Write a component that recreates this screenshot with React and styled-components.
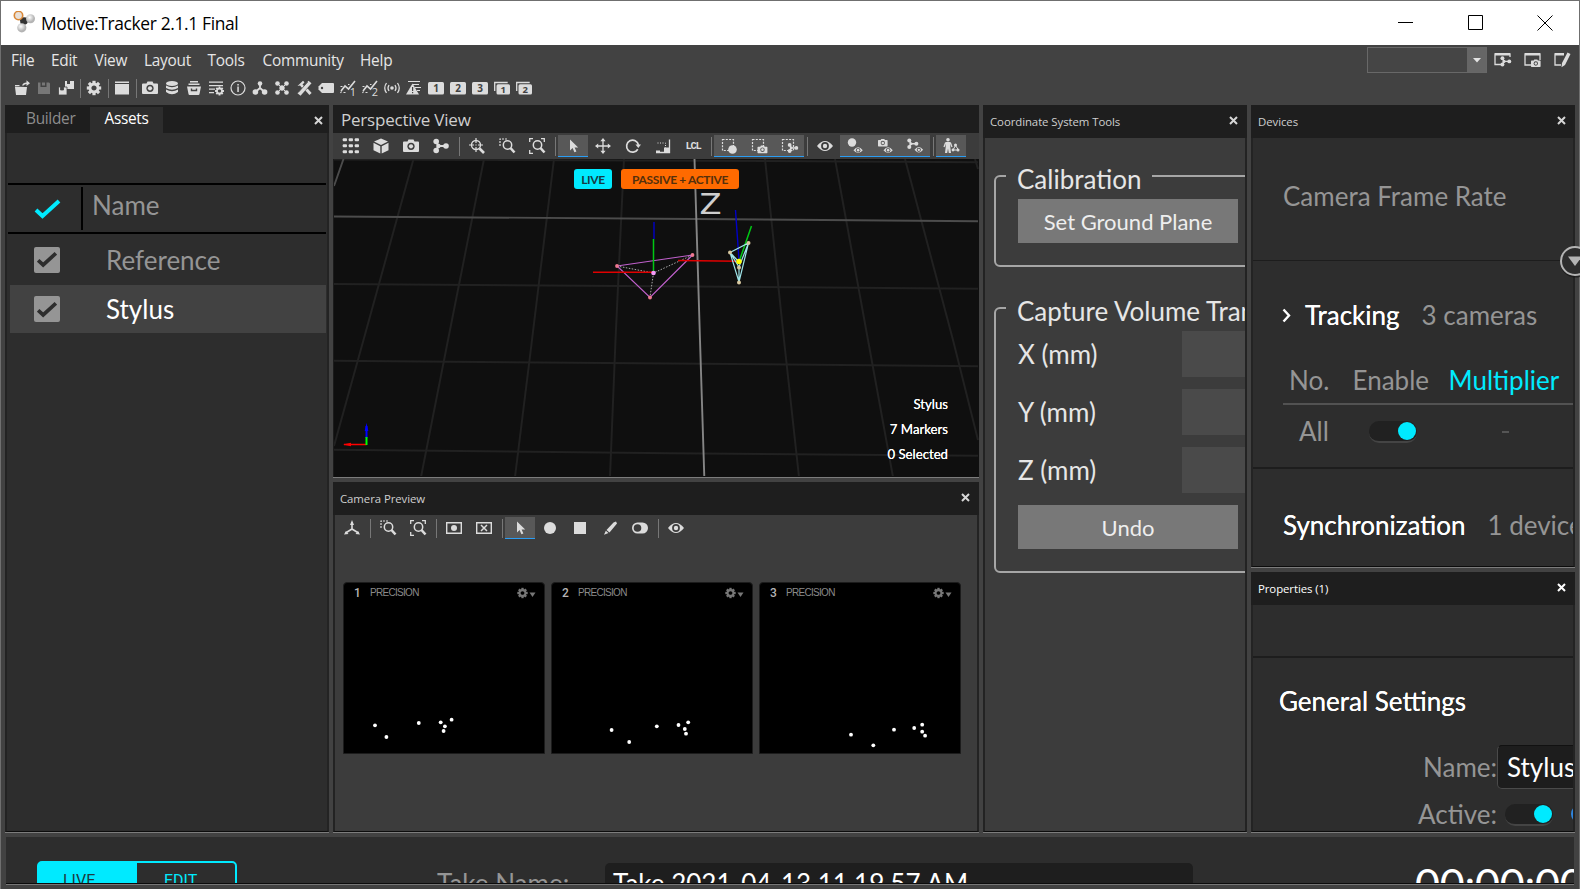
import React from "react";
import styled, { createGlobalStyle, css } from "styled-components";

const c = {
  chrome: "#424242", title: "#1e1e1e", panel: "#2d2d2d", tool: "#3c3c3c",
  icon: "#dcdcdc", dim: "#959595", text: "#e6e6e6", cyan: "#00eaff", blue: "#2a9df4",
};
const segoe = `"Open Sans", "Noto Sans", sans-serif`;
const lato = `Lato, "Open Sans", sans-serif`;

const Global = createGlobalStyle`
  * { box-sizing: border-box; }
  body { margin: 0; background: ${c.chrome}; overflow: hidden; }
  svg { display: block; flex: none; }
`;

/* ---------- window chrome ---------- */
const Window = styled.div`
  width: 1580px; height: 889px; display: flex; flex-direction: column; overflow: hidden;
  background: ${c.chrome}; border: 1px solid #6f6f6f; border-bottom: 0;
  font-family: ${lato}; color: ${c.text}; white-space: nowrap;
`;
const TitleBar = styled.header`
  height: 44px; flex: none; display: flex; align-items: center; background: #fff; color: #000;
  padding: 0 26px 0 11px; font: 17.4px ${segoe}; letter-spacing: -0.35px;
`;
const AppName = styled.span`margin-left: 5px; flex: 1;`;
const WindowButtons = styled.div`display: flex; gap: 54px;`;
const MenuArea = styled.div`height: 60px; flex: none; display: flex; justify-content: space-between;`;
const MenuLeft = styled.div`display: flex; flex-direction: column;`;
const MenuBar = styled.nav`display: flex; height: 31px; align-items: center; padding-left: 10px;`;
const MenuItem = styled.span`
  width: ${p => p.$w}px; font: 15.4px ${segoe}; letter-spacing: -0.25px;
`;
const MainTools = styled.div`display: flex; height: 24px; align-items: center; padding-left: 10px;`;
const MenuRight = styled.div`display: flex; height: 30px; align-items: center; padding-right: 2px;`;
const Combo = styled.div`
  width: 120px; height: 26px; border: 1px solid #686868; background: #454545;
  display: flex; justify-content: flex-end;
`;
const ComboArrow = styled.div`
  width: 19px; background: #666; display: flex; align-items: center; justify-content: center;
`;

/* ---------- tool buttons ---------- */
const Tool = styled.span`
  width: ${p => p.$w || 30}px; height: 22px; display: flex; align-items: center; justify-content: center;
  ${p => p.$on && css`background: #585858; border-bottom: 1px solid ${c.blue};`}
`;
const Sep = styled.span`width: 6px; display: flex; justify-content: center;
  &::before { content: ""; width: 1px; height: 19px; background: #777; }`;
const Toolbar = styled.div`
  height: 26px; flex: none; display: flex; align-items: center; background: ${c.tool};
  padding-left: ${p => p.$pad}px;
`;
const Lcl = styled.span`font: bold 10.5px "Liberation Mono", monospace; letter-spacing: -1.3px; color: ${c.icon};`;

/* ---------- dock panels ---------- */
const Dock = styled.main`height: 728px; flex: none; display: flex; gap: 4px; padding-left: 4px;`;
const Column = styled.div`width: ${p => p.$w}px; display: flex; flex-direction: column; gap: 4px;`;
const Panel = styled.section`
  display: flex; flex-direction: column; overflow: hidden;
  height: ${p => p.$h ? p.$h + "px" : "auto"}; flex: ${p => p.$h ? "none" : "1"};
  border-bottom: 1px solid #7c7c7c;
`;
const PanelTitle = styled.div`
  height: ${p => p.$h || 33}px; flex: none; background: ${c.title}; display: flex; align-items: center;
  justify-content: space-between; padding: 0 9px 0 ${p => p.$pad || 7}px; color: ${p => p.$bright ? "#fff" : "#cfcfcf"};
  font: ${p => p.$size || 11.4}px ${segoe}; letter-spacing: ${p => p.$ls || -0.07}px;
  & > svg { margin-bottom: 2px; }
`;
const Body = styled.div`
  flex: 1; min-height: 0; overflow: hidden; background: ${p => p.$bg || c.panel};
  border: 2px solid #232323; border-width: 0 2px 1px 2px; border-bottom-color: #0c0c0c;
  display: flex; flex-direction: column;
`;

/* ---------- assets ---------- */
const TabStrip = styled.div`
  height: 28px; flex: none; background: ${c.title}; display: flex; align-items: flex-end; padding-right: 6px;
`;
const Tab = styled.div`
  height: 26px; padding-left: ${p => p.$pad}px; width: ${p => p.$w}px; line-height: 24px;
  font-family: ${segoe}; font-size: 15.4px; letter-spacing: -0.3px;
  color: ${p => p.$active ? "#fff" : "#8d8d8d"}; background: ${p => p.$active ? c.panel : "transparent"};
`;
const TabClose = styled.div`margin-left: auto; height: 25px; display: flex; align-items: center;`;
const AssetHead = styled.div`
  height: 51px; flex: none; margin: 50px 1px 0; border: 2px solid #000; border-width: 2px 0;
  display: flex; align-items: center; font-size: 26px; color: ${c.dim};
`;
const HeadCheck = styled.div`
  width: 75px; height: 43px; border-right: 2px solid #000; padding-left: 26px; display: flex; align-items: center;
`;
const HeadName = styled.span`padding: 0 0 7px 9px;`;
const AssetRow = styled.div`
  height: ${p => p.$on ? 48 : 51}px; flex: none; display: flex; align-items: center; margin: 0 1px 0 3px;
  padding-left: 24px; gap: 46px; font-size: 26px;
  color: ${p => p.$on ? "#fff" : c.dim}; background: ${p => p.$on ? "#424242" : "transparent"};
`;
const Check = styled.div`
  width: 26px; height: 26px; border-radius: 2px; background: ${c.dim};
  display: flex; align-items: center; justify-content: center;
`;

/* ---------- 3D viewport ---------- */
const Viewport = styled.div`
  flex: 1; position: relative; background: #0f0f0f; overflow: hidden; border-left: 1px solid #1b1b1b;
`;
const Badges = styled.div`position: absolute; left: 240px; top: 10px; display: flex; gap: 9px;`;
const Badge = styled.span`
  width: ${p => p.$w}px; height: 20px; border-radius: 3px; background: ${p => p.$bg}; color: ${p => p.$fg};
  display: flex; align-items: center; justify-content: center; letter-spacing: -0.35px;
  font: bold 12px Lato, sans-serif;
`;
const Stats = styled.div`
  position: absolute; right: 31px; top: 233px; text-align: right; color: #fff;
  font-size: 13.2px; line-height: 25px; text-shadow: 0 0 0.5px #fff;
`;

/* ---------- camera preview ---------- */
const Cameras = styled.div`display: flex; gap: 6px; padding: 41px 0 0 7px;`;
const Camera = styled.div`
  width: 202px; height: 172px; background: #000; border-radius: 4px 4px 0 0; position: relative;
  border: 1px solid #1c1c1c; margin-left: 1px; margin-right: -1px;
`;
const CameraHead = styled.div`
  display: flex; align-items: center; height: 19px; padding: 0 8px 0 10px; color: #8a8a8a;
  font: 10px "Liberation Sans", sans-serif; letter-spacing: -0.7px;
`;
const CameraNo = styled.span`width: 16px; font: 500 12px Roboto, sans-serif; color: #b5b5b5;`;
const CameraMenu = styled.span`margin-left: auto;`;
const Blobs = styled.svg`position: absolute; left: -1px; top: -1px;`;

/* ---------- coordinate tools ---------- */
const Group = styled.div`
  height: ${p => p.$h}px; flex: none; margin: ${p => p.$mt}px 0 0 9px; width: 300px;
  border: 2px solid #a6a6a6; border-radius: 6px; padding-left: 22px;
`;
const Legend = styled.div`
  width: fit-content; height: 32px; line-height: 32px; font-size: 26px; background: ${c.tool};
  margin: -14px 0 0 -12px; padding: 0 10px 0 11px;
`;
const Button = styled.div`
  width: 220px; height: 44px; background: #787878; font-size: 22px; color: #eee;
  display: flex; align-items: center; justify-content: center; padding-top: 1px;
  margin-top: ${p => p.$mt || 0}px;
`;
const AxisRow = styled.div`
  display: flex; height: 46px; margin: ${p => p.$first ? 4 : 0}px 0 12px; align-items: center; font-size: 26px;
`;
const AxisLabel = styled.span`width: 164px; flex: none;`;
const AxisField = styled.span`width: 120px; height: 46px; flex: none; background: #4a4a4a;`;

/* ---------- devices & properties ---------- */
const Line26 = styled.div`
  height: ${p => p.$h}px; flex: none; display: flex; align-items: center; font-size: 26px; color: ${c.dim};
  margin-top: ${p => p.$mt || 0}px; padding-left: ${p => p.$pad || 0}px; padding-bottom: ${p => p.$pb || 0}px;
  border-bottom: ${p => p.$rule || 0}px solid #1d1d1d;
`;
const Strong = styled.span`
  color: #fff; margin: 0 ${p => p.$mr || 0}px 0 ${p => p.$ml || 0}px; text-shadow: 0 0 0.4px #fff;
`;
const Columns = styled(Line26)`margin-left: 30px; border-bottom: 2px solid #525252;`;
const Cell = styled.span`width: ${p => p.$w}px; flex: none; color: ${p => p.$hot ? c.cyan : "inherit"};`;
const Toggle = styled.span`
  width: 48px; height: 22px; border-radius: 10px; background: #212121; flex: none;
  border-bottom: 2px solid #444; display: flex; justify-content: flex-end; align-items: flex-start;
  padding: 1px 1px 0 0; margin-left: ${p => p.$ml || 0}px; margin-top: 2px;
  &::after { content: ""; width: 18px; height: 18px; flex: none; border-radius: 50%; background: ${c.cyan}; }
`;
const Dash = styled.span`width: 7px; height: 2px; background: #555; margin: 2px 0 0 85px;`;
const Key = styled.span`width: 244px; flex: none; text-align: right;`;
const NameField = styled.span`
  width: 120px; height: 44px; flex: none; background: #1d1d1d; color: #fff; border: 1px solid #4a4a4a; border-top-color: #111;
  border-radius: 5px; padding: 2px 0 0 9px; line-height: 38px;
`;
const Ring = styled.span`
  width: 18px; height: 18px; flex: none; border-radius: 50%; margin-left: 18px; border: 3px solid #2f86e0;
`;
const Flyout = styled.div`position: absolute; left: 1559px; top: 245px; width: 21px; height: 34px; overflow: hidden;`;

/* ---------- control deck ---------- */
const Deck = styled.footer`
  height: 48px; flex: none; margin: 4px 5px 0 5px; overflow: hidden; background: ${c.panel};
  border-bottom: 1px solid #777; box-shadow: inset 0 -1px #0c0c0c;
`;
const DeckClip = styled.div`
  height: 46px; overflow: hidden; display: flex; align-items: flex-start;
  & > * { flex: none; }
`;
const Modes = styled.div`
  width: 200px; height: 50px; margin: 24px 0 0 31px; border: 2px solid ${c.cyan}; border-radius: 5px;
  display: flex; font: 16px Roboto, sans-serif;
`;
const Mode = styled.span`
  width: ${p => p.$w}px; padding: 8px 0 0 ${p => p.$pad}px;
  background: ${p => p.$on ? c.cyan : "transparent"}; color: ${p => p.$on ? "#1f3b40" : c.cyan};
`;
const TakeLabel = styled.span`margin: 31px 0 0 200px; width: 168px; font-size: 26px; line-height: 31px; color: ${c.dim};`;
const TakeField = styled.span`
  width: 588px; height: 50px; margin-top: 26px; border-radius: 5px; background: ${c.title}; color: #fff;
  font-size: 26px; line-height: 31px; padding: 5px 0 0 8px;
`;
const Clock = styled.span`margin: 21px 0 0 222px; font-size: 43px; line-height: 51px; color: #fff; letter-spacing: -0.2px;`;

/* ---------- icons ---------- */
const gearTeeth = [0, 45, 90, 135, 180, 225, 270, 315];
const Gear = ({ x = 8, y = 8, s = 1 }) => (
  <g transform={`translate(${x} ${y}) scale(${s})`}>
    {gearTeeth.map(a => <rect key={a} x="-1.6" y="-7.2" width="3.2" height="3.4" transform={`rotate(${a})`} />)}
    <circle r="4" fill="none" stroke="currentColor" strokeWidth="2.8" />
  </g>
);
const Cam = ({ x = 0, y = 0, s = 1, hole = "#3c3c3c" }) => (
  <g transform={`translate(${x} ${y}) scale(${s})`}>
    <path d="M1 3.5h3.5L5.5 1.5h5l1 2H15q1 0 1 1V13q0 1-1 1H1q-1 0-1-1V4.5q0-1 1-1z" />
    <circle cx="8" cy="8.3" r="3.6" fill={hole} /><circle cx="8" cy="8.3" r="2.1" />
  </g>
);
const Eye = ({ x = 0, y = 0, s = 1, hole = "#3c3c3c" }) => (
  <g transform={`translate(${x} ${y}) scale(${s})`}>
    <path d="M0 8Q8-2 16 8Q8 18 0 8z" />
    <circle cx="8" cy="8" r="3.9" fill={hole} /><circle cx="8" cy="8" r="2.2" />
  </g>
);
const Rigid = ({ x = 0, y = 0, s = 1 }) => (
  <g transform={`translate(${x} ${y}) scale(${s})`}>
    <circle cx="3.2" cy="3.5" r="2.8" /><circle cx="3.2" cy="12.5" r="2.8" /><circle cx="13" cy="8" r="2.8" />
    <circle cx="5.4" cy="8" r="2.2" />
    <path d="M3.2 3.5L5.4 8L3.2 12.5M5.4 8H13" fill="none" stroke="currentColor" strokeWidth="2" />
  </g>
);
const Marquee = () => <path d="M1.5 1.5h11v11h-11z" fill="none" stroke="currentColor" strokeWidth="1.2" strokeDasharray="2 1.3" />;
const Lens = () => <><circle cx="8.5" cy="7" r="4.2" fill="none" stroke="currentColor" strokeWidth="1.5" /><path d="M11.5 10L15.5 14.5" stroke="currentColor" strokeWidth="2.6" /></>;
const Num = ({ n, stack }) => stack ? <>
  <path d="M.7 11V2.500h13" fill="none" stroke="currentColor" strokeWidth="1.3" />
  <rect x="2.500" y="4.2" width="13.500" height="10.300" rx="1.5" />
  <text x="9.3" y="12.8" textAnchor="middle" fontSize="9.5" fontWeight="bold" fontFamily="Open Sans" fill="#424242">{n}</text>
</> : <>
  <rect x="0" y="2" width="16" height="12.500" rx="1.5" />
  <text x="8" y="11.8" textAnchor="middle" fontSize="10" fontWeight="bold" fontFamily="Open Sans" fill="#424242">{n}</text>
</>;
const Frame = () => <path d="M16 8V2H1v11h7" fill="none" stroke="currentColor" strokeWidth="1.3" />;
const Graph = ({ n }) => <>
  <path d="M1 11l4-5 3.5 3L15 1" fill="none" stroke="currentColor" strokeWidth="1.6" />
  <path d="M.5 6.500h2M3.500 12.500h2M8 4.5h1.5M.5 13l1-1.500" stroke="currentColor" strokeWidth="1.2" />
  <text x="12.800" y="15.5" textAnchor="middle" fontSize="11" fontFamily="Open Sans" fill="currentColor">{n}</text>
</>;

const art = {
  open: <><path d="M1 7h12l-1 8H2zM1 6.500V5h4l1 1h5" /><path d="M8 5.500Q9 2.500 12.500 2.500V.3l3.500 3-3.500 2.700V4Q10.500 4 9.500 5.500z" /></>,
  save: <path fill="#777" d="M2 2.500h2.500V7h6V2.500H13L14 3.500V14H2zM6 2.500h3v3H6z" />,
  saveAll: <><path d="M7 1h2v3h3V1h4v8H7z" /><path d="M.5 7h2v3h3V7h3.500v8H.5z" stroke="#424242" strokeWidth=".8" /></>,
  gear: <Gear />,
  pane: <><path d="M1 1.500h14v1.500H1zM1 4h14v10.500H1z" /></>,
  camera: <Cam hole="#424242" />,
  disks: <><ellipse cx="8" cy="3.500" rx="6" ry="2.500" /><path d="M2 5.500q6 3.500 12 0v2.500q-6 3.500-12 0zM2 9.500q6 3.500 12 0v2.500q-6 4.500-12 0z" /></>,
  box: <><path d="M4 1h8v1.500H4zM2.500 3.500h11V5h-11zM1 6.500h14L13.500 14q-.2 1-1 1h-9q-.8 0-1-1z" /><path d="M5.500 8.500v2h5v-2" fill="none" stroke="#424242" strokeWidth="1.400" /></>,
  listGear: <><path d="M1 1.500h14v1.200H1zM1 5h14v1.200H1zM1 8.500h6v1.200H1zM1 12h5v1.200H1z" /><Gear x={11.5} y={11} s={0.62} /></>,
  info: <><circle cx="8" cy="8" r="7" fill="none" stroke="currentColor" strokeWidth="1.200" /><path d="M7.300 6.500h1.500V12H7.300zM7.300 4h1.500v1.500H7.300z" /></>,
  tri: <><circle cx="8" cy="3.500" r="2.300" /><circle cx="3.400" cy="12" r="2.800" /><circle cx="12.600" cy="12" r="2.800" /><path d="M8 3.500V8L3.400 12M8 8l4.600 4" fill="none" stroke="currentColor" strokeWidth="1.800" /></>,
  five: <><circle cx="3.500" cy="3.500" r="2.300" /><circle cx="12.500" cy="3.500" r="2.300" /><circle cx="3.500" cy="12.500" r="2.300" /><circle cx="12.500" cy="12.500" r="2.300" /><circle cx="8" cy="8" r="2.700" /><path d="M3.500 3.500l9 9M12.500 3.500l-9 9" stroke="currentColor" /></>,
  tools: <><path d="M1.500 6L7 .8l1.500 1.500-2 2.500 2 1.500-2 2.200-2.500-3z" /><path d="M3 14.500L14 2" stroke="currentColor" strokeWidth="4" /><path d="M2.200 12.500l9.500-10.500" stroke="#424242" strokeWidth=".8" /><path d="M10.500 9.500l4 4.500" stroke="currentColor" strokeWidth="3" /></>,
  tag: <><path d="M4 3h11q1 0 1 1v8q0 1-1 1H4L.5 9.500v-3z" /><circle cx="4" cy="8" r="1.200" fill="#424242" /></>,
  graph1: <Graph n="1" />, graph2: <Graph n="2" />,
  radio: <><circle cx="8" cy="8" r="1.800" /><path d="M5 5q-2 3 0 6M11 5q2 3 0 6M2.500 3q-3.500 5 0 10M13.500 3q3.500 5 0 10" fill="none" stroke="currentColor" strokeWidth="1.300" /></>,
  warn: <><path d="M2 1.500h12M7 4.500h6M9 7.500h6M11 10.500h3" stroke="currentColor" strokeWidth="1.200" /><path d="M6.500 3.500L13 14.500H0z" /><path d="M6 7h1.200v4H6zM6 12h1.200v1.200H6z" fill="#424242" /></>,
  n1: <Num n="1" />, n2: <Num n="2" />, n3: <Num n="3" />, s1: <Num n="1" stack />, s2: <Num n="2" stack />,
  winRigid: <><path d="M16 5V2H1v10.500h6" fill="none" stroke="currentColor" strokeWidth="1.300" /><path d="M1 1h15v2.500H1z" /><Rigid x={6.200} y={3.800} s={0.7} /></>,
  winCam: <><Frame /><path d="M1 1h15v2.500H1z" /><Cam x={7} y={6.500} s={0.6} hole="#424242" /></>,
  winEdit: <><path d="M10 2H1v11h6" fill="none" stroke="currentColor" strokeWidth="1.300" /><path d="M1 1h9v2.500H1zM13.500 .5l3 1.500-5.500 11-3.500 2.200.5-4.200z" /></>,
  grid: <>{[0, 6, 12].map(y => [0, 6, 12].map(x => <rect key={x + "-" + y} x={x - 0.3} y={y + 0.3} width="4.300" height="3" rx="1" />))}</>,
  cube: <><path d="M8 .5l7 3L8 7 1 3.500zM.5 4.800l6.800 3.400v7.300L.5 12.200zM15.500 4.800L8.700 8.200v7.300l6.800-3.300z" /></>,
  cam: <Cam />, rigid: <Rigid />,
  zoomTarget: <><circle cx="7" cy="7" r="4.500" fill="none" stroke="currentColor" strokeWidth="1.400" /><path d="M7 0v14M0 7h14" stroke="currentColor" strokeWidth="1.200" strokeDasharray="5 1.500 1 1.500" /><path d="M10.500 10.500l4.500 4.500" stroke="currentColor" strokeWidth="2.600" /></>,
  zoomArea: <><path d="M1 8V1h8" fill="none" stroke="currentColor" strokeWidth="1.200" strokeDasharray="2 1" /><Lens /></>,
  zoomFit: <><path d="M.7 4V.7H4M12 .7h3.300V4M.7 12v3.300H4" fill="none" stroke="currentColor" strokeWidth="1.300" /><Lens /></>,
  cursor: <path d="M5 1.500v11l2.600-2.400 1.800 4.200 2-.9-1.800-4h3.600z" />,
  move: <><path d="M8 2v12M2 8h12" stroke="currentColor" strokeWidth="1.300" /><path d="M8 0l2.600 3.200H5.400zM8 16l2.600-3.200H5.400zM0 8l3.200-2.600v5.200zM16 8l-3.200-2.600v5.200z" /></>,
  rotate: <><path d="M12.800 11.200A6 6 0 1 1 13.500 7" fill="none" stroke="currentColor" strokeWidth="1.700" /><path d="M10.500 6.500h5.500L13.300 10z" /></>,
  scale: <><path d="M14.500 1.500v13H1" fill="none" stroke="currentColor" strokeWidth="1.300" /><path d="M2.500 5h8v5" fill="none" stroke="currentColor" strokeDasharray="1 1.500" /><path d="M9 9.500h5v5H9zM1 12.500h4v2H1z" /></>,
  selMarker: <><Marquee /><circle cx="11.500" cy="11.500" r="4.300" /></>,
  selCam: <><Marquee /><Cam x={6.500} y={6.500} s={0.62} hole="#585858" /></>,
  selRigid: <><Marquee /><Rigid x={6.500} y={4.500} s={0.68} /></>,
  eye: <Eye />,
  eyeMarker: <><circle cx="5" cy="4.500" r="4.200" /><Eye x={6.500} y={7.500} s={0.58} hole="#585858" /></>,
  eyeCam: <><Cam x={1} y={0} s={0.6} hole="#585858" /><Eye x={6.500} y={7.500} s={0.58} hole="#585858" /></>,
  eyeRigid: <><Rigid x={0} y={0} s={0.72} /><Eye x={7.500} y={7.500} s={0.54} hole="#585858" /></>,
  person: <><circle cx="5" cy="1.800" r="1.800" /><path d="M2.700 4h4.600v5L8 15H5.800L5 10.500 4.200 15H2l.7-6z" /><path d="M2.700 4.500L1 9M7.300 4.500L9 9" stroke="currentColor" strokeWidth="1.300" /><path d="M12.500 7.500l-2.500 4.500h5.500z" fill="none" stroke="currentColor" /><circle cx="12.500" cy="7" r="1.500" /><circle cx="10" cy="12" r="1.400" /><circle cx="15" cy="12" r="1.500" /></>,
  tripod: <><path d="M8 2v7L1.500 13M8 9l6.500 4" fill="none" stroke="currentColor" strokeWidth="1.600" /><path d="M8 0l2 5H6zM0 14.500l2-3.500 2.500 3zM16 14.500L14 11l-2.500 3z" /></>,
  recDot: <><path d="M.7 2.700h14.600v10.600H.7z" fill="none" stroke="currentColor" strokeWidth="1.400" /><circle cx="8" cy="8" r="3" /></>,
  recX: <><path d="M.7 2.700h14.600v10.600H.7z" fill="none" stroke="currentColor" strokeWidth="1.400" /><path d="M5 5l6 6M11 5l-6 6" stroke="currentColor" strokeWidth="1.500" /></>,
  dot: <circle cx="8" cy="8" r="6" />, square: <path d="M2 2h12v12H2z" />,
  pencil: <path d="M11.500 2.500l2.500-1 1 2-7.500 9-3-2.500zM3.800 10.800l2.700 2.200-4.500 1.700z" />,
  pill: <><rect x="0" y="2.500" width="16" height="11" rx="5.500" /><circle cx="5.500" cy="8" r="3.800" fill="#3c3c3c" /></>,
};
const Icon = ({ n }) => <svg width="16" height="16" viewBox="0 0 16 16" fill="currentColor" color={c.icon} overflow="visible">{art[n]}</svg>;
const Close = ({ bright }) => <svg width="9" height="9" viewBox="0 0 9 9" stroke={bright ? "#fff" : "#d6d6d6"} strokeWidth="2"><path d="M1 1l7 7M8 1L1 8" /></svg>;
const Tick = ({ w, h, color, sw }) => <svg width={w} height={h} viewBox="0 0 26 20" fill="none" stroke={color} strokeWidth={sw}><path d="M1.500 11l6.500 6L24.500 2" /></svg>;
/* "|" is a separator; a leading "*" marks a pressed button. */
const tools = (items, w) => items.map((t, i) => t === "|" ? <Sep key={i} /> :
  <Tool key={i} $w={w} $on={t[0] === "*"}>{t === "LCL" ? <Lcl>LCL</Lcl> : <Icon n={t.replace("*", "")} />}</Tool>);

const Logo = () => (
  <svg width="24" height="24" viewBox="0 0 24 24">
    <defs><radialGradient id="ball" cx=".4" cy=".35"><stop offset="0" stopColor="#fff" /><stop offset="1" stopColor="#b4b4b4" /></radialGradient></defs>
    <g transform="translate(0 -1)">
      <path d="M7 6l4 5 7-3M11 11l-1 7" stroke="#444" strokeWidth="4" fill="none" />
      <circle cx="12" cy="11" r="3.800" fill="#333" />
      <circle cx="6.500" cy="5.500" r="4.200" fill="#e8e0d8" stroke="#d98736" strokeWidth="1.600" />
      <circle cx="18.500" cy="8.800" r="4.500" fill="url(#ball)" /><circle cx="9.800" cy="17.800" r="4.600" fill="url(#ball)" />
    </g>
  </svg>
);

/* Scene coordinates are window pixels; the viewBox starts at the viewport's corner. */
const Scene = () => (
  <svg width="645" height="317" viewBox="334 159 645 317" fill="none">
    <g stroke="#212121" strokeWidth="2">
      <path d="M334 159.500L765 161 978 162.300M334 284l326 2.300L978 288.700M334 360.700l336 2.800 308 2.700M334 449.700l336 3.500 308 2.500" />
      <path d="M413.500 159L363.500 340 334 446M484 159l-36 181-27 137M554 159l-22 181-17 137M624 159l-8.500 181-5.500 137M765 159l19 181 15 137M835 159l33 181 25 137M905 159l48 181 25 100M975 159l3 10" />
    </g>
    <path d="M343.500 159L334 186M334 216.500l326 2.200 318 2.500" stroke="#4c4c4c" strokeWidth="1.900" />
    <path d="M694.500 159l5.500 181 4.300 137" stroke="#858585" strokeWidth="1.900" />
    <text transform="translate(699.500 214) scale(1.150 1)" fontFamily="DejaVu Sans" fontSize="28" fill="#cfcfcf">Z</text>
    <path d="M617 266l75.500-11L650 297.500z" stroke="#c060cc" strokeWidth="1.200" />
    <path d="M617 266l36.500 7 39-18M653.500 273l-3.500 24" stroke="#aaa" strokeDasharray="1.500 1.500" />
    <path d="M593 272.300h60M678 260.500l61 .8" stroke="#e00000" strokeWidth="1.400" />
    <path d="M654 222v17M735.500 210l3.500 50" stroke="#0000c8" strokeWidth="1.400" />
    <path d="M653.500 239v33M751.500 226L740 259" stroke="#00c814" strokeWidth="1.500" />
    <path d="M730 252.500l18.500-9.500L739 282zM730 252.500l9 14.500 9.500-24M739 267v15M731.500 254l7.500 8" stroke="#9fe6ea" strokeWidth="1.200" />
    <g fill="#ee7890"><circle cx="617" cy="266" r="1.900" /><circle cx="692.500" cy="255" r="1.900" /><circle cx="650" cy="297.500" r="1.900" /></g>
    <circle cx="653.500" cy="273" r="2.300" fill="#f49cf8" />
    <g fill="#d8c8a0"><circle cx="730" cy="252.500" r="2" /><circle cx="748.500" cy="243" r="2" /><circle cx="739" cy="267.500" r="2" /><circle cx="739" cy="282.500" r="2" /></g>
    <circle cx="739" cy="261.500" r="2.700" fill="#ff0" />
    <path d="M366.500 444.500H344" stroke="#f00" strokeWidth="1.500" /><path d="M343 444.500l8-1.700v3.400z" fill="#f00" />
    <path d="M366.500 438v-12" stroke="#00f" strokeWidth="2" /><path d="M366.500 423l1.800 8h-3.600z" fill="#00f" />
    <path d="M366.500 445v-8" stroke="#0f0" strokeWidth="2" />
  </svg>
);

const cameras = [
  { n: 1, dots: [[375, 725.3], [386.4, 737], [418.8, 723], [440.7, 722.3], [444.9, 726.3], [443.6, 731], [451.6, 719.7]] },
  { n: 2, dots: [[611.6, 730], [629.2, 742], [656.8, 726.3], [678.5, 725], [684.8, 729], [686, 733.7], [688.2, 722.3]] },
  { n: 3, dots: [[851, 734.7], [873.3, 745.3], [894, 729.7], [914.2, 728], [922.2, 724.7], [922.2, 731.7], [925.1, 735.7]] },
];
const menus = [["File", 40], ["Edit", 43.5], ["View", 49.5], ["Layout", 63.5], ["Tools", 55], ["Community", 97.5], ["Help", 50]];

export default function App() {
  return (
    <>
      <Global />
      <Window>
        <TitleBar>
          <Logo />
          <AppName>Motive:Tracker 2.1.1 Final</AppName>
          <WindowButtons>
            <svg width="16" height="16" stroke="#000"><path d="M0 7.500h15" /></svg>
            <svg width="15" height="16" stroke="#000" fill="none"><path d="M.5.5h14v14H.5z" /></svg>
            <svg width="16" height="16" stroke="#000"><path d="M.5.5l15 15M15.500.5l-15 15" /></svg>
          </WindowButtons>
        </TitleBar>

        <MenuArea>
          <MenuLeft>
            <MenuBar>{menus.map(([m, w]) => <MenuItem key={m} $w={w}>{m}</MenuItem>)}</MenuBar>
            <MainTools>
              {tools(["open", "save", "saveAll", "|", "gear", "|", "pane", "|", "camera", "disks", "box", "listGear", "info", "tri", "five", "tools", "tag", "graph1", "graph2", "radio", "warn", "n1", "n2", "n3", "s1", "s2"], 22)}
            </MainTools>
          </MenuLeft>
          <MenuRight>
            <Combo><ComboArrow><svg width="8" height="5"><path d="M0 0h8L4 4.500z" fill="#e4e4e4" /></svg></ComboArrow></Combo>
            {tools(["winRigid", "winCam", "winEdit"], 30)}
          </MenuRight>
        </MenuArea>

        <Dock>
          <Column $w={324}>
            <Panel>
              <TabStrip>
                <Tab $pad={21} $w={85}>Builder</Tab>
                <Tab $pad={14.5} $w={73} $active>Assets</Tab>
                <TabClose><Close /></TabClose>
              </TabStrip>
              <Body>
                <AssetHead>
                  <HeadCheck><Tick w={27} h={20} color={c.cyan} sw={4} /></HeadCheck>
                  <HeadName>Name</HeadName>
                </AssetHead>
                <AssetRow><Check><Tick w={20} h={17} color="#2d2d2d" sw={4.8} /></Check>Reference</AssetRow>
                <AssetRow $on><Check><Tick w={20} h={17} color="#2d2d2d" sw={4.8} /></Check>Stylus</AssetRow>
              </Body>
            </Panel>
          </Column>

          <Column $w={646}>
            <Panel $h={373}>
              <PanelTitle $h={28} $size={17} $ls={-0.2} $pad={8}>Perspective View</PanelTitle>
              <Toolbar $pad={3}>
                {tools(["grid", "cube", "cam", "rigid", "|", "zoomTarget", "zoomArea", "zoomFit", "|", "*cursor", "move", "rotate", "scale", "LCL", "|", "*selMarker", "*selCam", "*selRigid", "|", "eye", "*eyeMarker", "*eyeCam", "*eyeRigid", "|", "*person"])}
              </Toolbar>
              <Viewport>
                <Scene />
                <Badges>
                  <Badge $w={38} $bg={c.cyan} $fg="#143c44">LIVE</Badge>
                  <Badge $w={118} $bg="#ff6a00" $fg="#54300c">PASSIVE + ACTIVE</Badge>
                </Badges>
                <Stats><div>Stylus</div><div>7 Markers</div><div>0 Selected</div></Stats>
              </Viewport>
            </Panel>
            <Panel>
              <PanelTitle>Camera Preview<Close /></PanelTitle>
              <Body $bg={c.tool}>
                <Toolbar $pad={2}>
                  {tools(["tripod", "|", "zoomArea", "zoomFit", "|", "recDot", "recX", "|", "*cursor", "dot", "square", "pencil", "pill", "|", "eye"])}
                </Toolbar>
                <Cameras>
                  {cameras.map(({ n, dots }, i) => (
                    <Camera key={n}>
                      <CameraHead>
                        <CameraNo>{n}</CameraNo>PRECISION
                        <CameraMenu>
                          <svg width="19" height="12" fill="#777" color="#777"><Gear x={5.500} y={6} s={0.72} /><path d="M12.500 5.500h6L15.500 10z" /></svg>
                        </CameraMenu>
                      </CameraHead>
                      <Blobs width="202" height="171" viewBox={`${343 + i * 208} 582 202 171`} fill="#fff">
                        {dots.map(([x, y], k) => <circle key={k} cx={x} cy={y} r="1.900" />)}
                      </Blobs>
                    </Camera>
                  ))}
                </Cameras>
              </Body>
            </Panel>
          </Column>

          <Column $w={264}>
            <Panel>
              <PanelTitle>Coordinate System Tools<Close /></PanelTitle>
              <Body $bg={c.tool}>
                <Group $h={92} $mt={37}>
                  <Legend>Calibration</Legend>
                  <Button $mt={4}>Set Ground Plane</Button>
                </Group>
                <Group $h={266} $mt={40}>
                  <Legend>Capture Volume Translation</Legend>
                  <AxisRow $first><AxisLabel>X (mm)</AxisLabel><AxisField /></AxisRow>
                  <AxisRow><AxisLabel>Y (mm)</AxisLabel><AxisField /></AxisRow>
                  <AxisRow><AxisLabel>Z (mm)</AxisLabel><AxisField /></AxisRow>
                  <Button>Undo</Button>
                </Group>
              </Body>
            </Panel>
          </Column>

          <Column $w={324}>
            <Panel $h={463}>
              <PanelTitle>Devices<Close /></PanelTitle>
              <Body>
                <Line26 $h={123} $pad={30} $pb={7} $rule={1}>Camera Frame Rate</Line26>
                <Line26 $h={54} $mt={27} $pad={29}>
                  <svg width="10" height="15" fill="none" stroke="#fff" strokeWidth="2.400"><path d="M1.500 1.500L7 7.500 1.500 13.500" /></svg>
                  <Strong $mr={22} $ml={13}>Tracking</Strong>3 cameras
                </Line26>
                <Columns $h={48} $mt={15} $pad={6}>
                  <Cell $w={63.5}>No.</Cell><Cell $w={96}>Enable</Cell><Cell $w={120} $hot>Multiplier</Cell>
                </Columns>
                <Line26 $h={64} $pad={46} $pb={11} $rule={2}>
                  <Cell $w={70}>All</Cell><Toggle /><Dash />
                </Line26>
                <Line26 $h={96} $mt={8} $pad={30}><Strong $mr={22}>Synchronization</Strong>1 device</Line26>
              </Body>
            </Panel>
            <Panel>
              <PanelTitle $bright>Properties (1)<Close bright /></PanelTitle>
              <Body>
                <Line26 $h={53} $rule={2} />
                <Line26 $h={70} $mt={8} $pad={26}><Strong>General Settings</Strong></Line26>
                <Line26 $h={44} $mt={9}><Key>Name:</Key><NameField>Stylus</NameField></Line26>
                <Line26 $h={48} $mt={1}><Key>Active:</Key><Toggle $ml={8} /><Ring /></Line26>
              </Body>
            </Panel>
          </Column>
        </Dock>

        <Deck>
          <DeckClip>
            <Modes><Mode $on $w={98} $pad={24}>LIVE</Mode><Mode $w={98} $pad={27}>EDIT</Mode></Modes>
            <TakeLabel>Take Name:</TakeLabel>
            <TakeField>Take 2021-04-13 11.19.57 AM</TakeField>
            <Clock>00:00:00</Clock>
          </DeckClip>
        </Deck>
        <Flyout>
          <svg width="34" height="34">
            <circle cx="16.500" cy="17" r="15.500" fill="#151515" opacity=".7" />
            <circle cx="16" cy="16" r="14" fill="#2d2d2d" stroke="#b4b4b4" strokeWidth="2" />
            <path d="M9 11.500h14L16 21z" fill="#b4b4b4" />
          </svg>
        </Flyout>
      </Window>
    </>
  );
}
